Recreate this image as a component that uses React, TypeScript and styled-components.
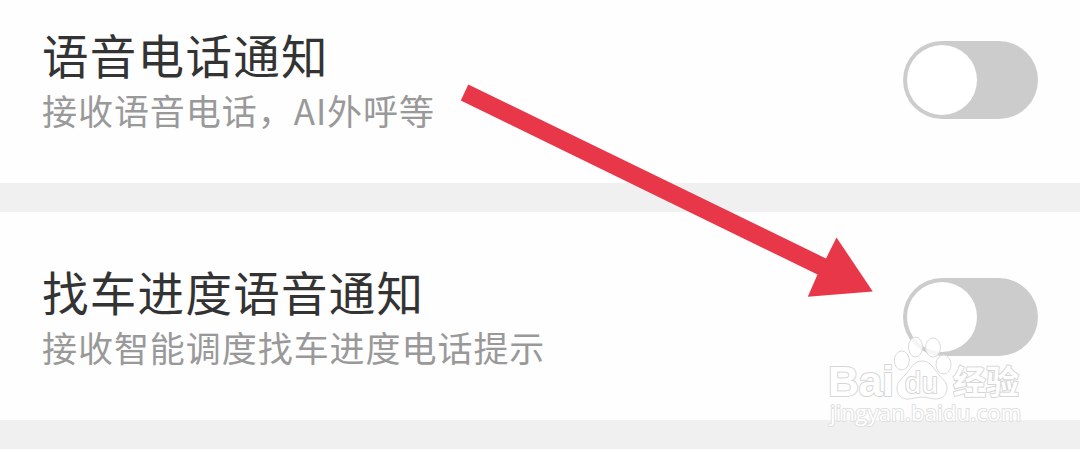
import { useState } from "react";
import styled, { createGlobalStyle } from "styled-components";

const App = () => {
  return (
    <>
      <GlobalStyle />
      <Screen>
        <SettingRow
          title="语音电话通知"
          description="接收语音电话，AI外呼等"
          height={183}
        />
        <Divider />
        <SettingRow
          title="找车进度语音通知"
          description="接收智能调度找车进度电话提示"
          height={208}
        />
        <Divider />
        <Arrow />
        <Watermark />
      </Screen>
    </>
  );
};

type SettingRowProps = {
  title: string;
  description: string;
  height: number;
};

const SettingRow = ({ title, description, height }: SettingRowProps) => {
  const [on, setOn] = useState(false);
  return (
    <Row $height={height}>
      <Texts>
        <Title>{title}</Title>
        <Description>{description}</Description>
      </Texts>
      <Switch
        role="switch"
        aria-checked={on}
        aria-label={title}
        $on={on}
        onClick={() => setOn(!on)}
      >
        <Knob />
      </Switch>
    </Row>
  );
};

const Arrow = () => (
  <Overlay viewBox="0 0 1080 452">
    <path
      d="M468.3 84.5L826 258.5L836.5 237.5L872.8 291.5L807.8 296.7L817.5 274.5L460.8 100.5Z"
      fill="#e83748"
    />
  </Overlay>
);

const Watermark = () => (
  <Overlay viewBox="0 0 1080 452">
    <Paw>
      <ellipse cx="901.8" cy="360.5" rx="7.5" ry="9.5" />
      <ellipse cx="915.5" cy="347" rx="7" ry="10" />
      <ellipse cx="933" cy="347.5" rx="7.5" ry="9.5" />
      <ellipse cx="943.5" cy="364.5" rx="7.5" ry="9.5" />
      <path d="M922 361C931 361 934 369 939 375C944 380 947 383 947 388C947 395 942 399 936 399C930 399 928 397 922 397C916 397 913 399 908 399C901 399 897 395 897 388C897 383 901 379 905 375C911 369 913 361 922 361Z" />
    </Paw>
    <Brand x="828" y="396" fontSize="43" textLength="66">
      Bai
    </Brand>
    <Du x="905" y="392.5" fontSize="29" textLength="33">
      du
    </Du>
    <Brand x="953" y="394" fontSize="33" textLength="66">
      经验
    </Brand>
    <Site x="830" y="421" fontSize="22" textLength="191">
      jingyan.baidu.com
    </Site>
  </Overlay>
);

const GlobalStyle = createGlobalStyle`
  body {
    margin: 0;
    background: #fefefe;
    font-family: "Noto Sans CJK SC", sans-serif;
  }
`;
const Screen = styled.main`
  position: relative;
  width: 1080px;
  height: 452px;
  overflow: hidden;
`;
const Row = styled.section<{ $height: number }>`
  display: flex;
  justify-content: space-between;
  align-items: flex-end;
  box-sizing: border-box;
  height: ${({ $height }) => $height}px;
  padding: 0 42px 64px 42px;
`;
const Texts = styled.div`
  display: flex;
  flex-direction: column;
  margin-bottom: -17px;
`;
const Title = styled.h2`
  margin: 0;
  font-size: 46.5px;
  line-height: 60px;
  font-weight: 400;
  letter-spacing: 1.3px;
  color: #333;
`;
const Description = styled.p`
  margin: 0;
  font-size: 35px;
  line-height: 52px;
  font-weight: 400;
  letter-spacing: 0.95px;
  color: #999;
`;
const Switch = styled.button<{ $on: boolean }>`
  display: flex;
  align-items: center;
  justify-content: ${({ $on }) => ($on ? "flex-end" : "flex-start")};
  box-sizing: border-box;
  width: 135px;
  height: 78px;
  padding: 0 4px;
  border: 0;
  border-radius: 39px;
  background: ${({ $on }) => ($on ? "#e83748" : "#ccc")};
  cursor: pointer;
`;
const Knob = styled.span`
  width: 70px;
  height: 70px;
  border-radius: 50%;
  background: #fff;
`;
const Divider = styled.div`
  height: 29px;
  background: #f0f0f0;
`;
const Overlay = styled.svg`
  position: absolute;
  top: 0;
  left: 0;
  width: 1080px;
  height: 452px;
  pointer-events: none;
`;
const Paw = styled.g`
  fill: #fff;
  fill-opacity: 0.8;
  stroke: #dadada;
  stroke-width: 1;
`;
const OutlinedText = styled.text`
  fill: #fff;
  stroke: #d6d6d6;
  paint-order: stroke;
  stroke-linejoin: round;
`;
const Brand = styled(OutlinedText)`
  font-family: "Liberation Sans", "Noto Sans CJK SC", sans-serif;
  font-weight: 700;
  stroke-width: 2px;
`;
const Du = styled(OutlinedText)`
  font-family: "Liberation Sans", sans-serif;
  stroke-width: 2px;
`;
const Site = styled(OutlinedText)`
  font-family: "Open Sans", sans-serif;
  stroke: #e0e0e0;
  stroke-width: 2px;
`;

export default App;
